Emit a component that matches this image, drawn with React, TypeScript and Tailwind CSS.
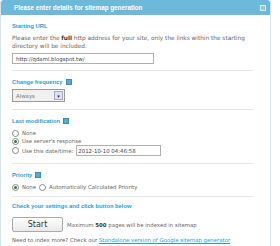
import React from "react";

const Help = () => (
  <span className="inline-block w-[6px] h-[6px] bg-[#5aa9d0] border border-[#3d8cb5] ml-[3px] align-middle" />
);

const Radio = ({ checked }: { checked?: boolean }) => (
  <span className="inline-flex items-center justify-center w-[7px] h-[7px] rounded-full border border-[#8a8a8a] bg-white mr-[3px]">
    {checked && <span className="w-[3px] h-[3px] rounded-full bg-[#2f7a3a]" />}
  </span>
);

const Sep = () => <div className="h-px bg-[#e6e6e6] mr-[17px]" />;

const Title = ({ children }: { children: React.ReactNode }) => (
  <div
    className="text-[#2a9ed6] font-bold text-[5.8px] leading-[8px] flex items-center"
    style={{ fontFamily: '"Liberation Sans", Arial, sans-serif' }}
  >
    {children}
  </div>
);

export default function App() {
  return (
    <div className="w-[280px] h-[246px] bg-white overflow-hidden" style={{ fontFamily: '"DejaVu Sans", Verdana, sans-serif' }}>
      <div className="w-[271px] border-r border-l border-[#d4e3ec] rounded-t-[3px]">
        <div className="h-[15px] bg-[#6cb9da] rounded-t-[3px] flex items-center justify-between pl-[13px] pr-[4px]">
          <span className="text-white font-bold text-[6.3px]" style={{ fontFamily: '"Liberation Sans", Arial, sans-serif' }}>
            Please enter details for sitemap generation
          </span>
          <span className="w-[6px] h-[6px] border border-[#d8eef8] bg-[#8fcbe6]" />
        </div>
        <div className="pl-[11px] pt-[7px] text-[#666] text-[5.4px] leading-[8px]">
          <Title>Starting URL</Title>
          <div className="mt-[4px] w-[234px] text-[5.8px] leading-[8px]">
            Please enter the <b className="text-[#333] leading-[8px]">full</b> http address for your site, only the links within the starting directory will be included.
          </div>
          <div className="mt-[3px] w-[142px] h-[11px] border border-[#b0b0b0] flex items-center px-[3px] text-[#444]">
            http://qdaml.blogspot.tw/
          </div>
          <div className="mt-[6px]"><Sep /></div>
          <div className="mt-[7px]"><Title>Change frequency<Help /></Title></div>
          <div className="mt-[3px] w-[53px] h-[13px] border border-[#9a9a9a] bg-[#f0f0f0] flex items-center justify-between pl-[3px] pr-[1px]">
            <span className="text-[#777]">Always</span>
            <span className="w-[9px] h-[9px] bg-[#d8e4f3] border border-[#aab] flex items-center justify-center text-[#335] text-[5px]">▾</span>
          </div>
          <div className="mt-[7px]"><Sep /></div>
          <div className="mt-[7px]"><Title>Last modification<Help /></Title></div>
          <div className="mt-[4px] flex flex-col">
            <div className="flex items-center h-[8px]"><Radio />None</div>
            <div className="flex items-center h-[8px]"><Radio checked />Use server's response</div>
            <div className="flex items-center h-[11px]"><Radio />Use this date/time:
              <span className="ml-[3px] w-[85px] h-[11px] border border-[#b0b0b0] flex items-center px-[1px] text-[#444]">2012-10-10 04:46:58</span>
            </div>
          </div>
          <div className="mt-[7px]"><Sep /></div>
          <div className="mt-[7px]"><Title>Priority<Help /></Title></div>
          <div className="mt-[4px] flex items-center h-[8px]"><Radio checked />None<span className="ml-[3px]" /><Radio />Automatically Calculated Priority</div>
          <div className="mt-[5px]"><Sep /></div>
          <div className="mt-[5px]"><Title>Check your settings and click button below</Title></div>
          <div className="mt-[7px] flex items-center">
            <span className="w-[51px] h-[15px] border border-[#aaa] rounded-[2px] bg-gradient-to-b from-white to-[#e8e8e8] flex items-center justify-center text-[#333] text-[8px]">Start</span>
            <span className="ml-[4px]">Maximum <b className="text-[#333]">500</b> pages will be indexed in sitemap</span>
          </div>
          <div className="mt-[4px]">
            Need to index more? Check our <span className="text-[#2a9ed6] underline">Standalone version of Google sitemap generator</span>
          </div>
          <div>and also find out about our other sitemap tools</div>
        </div>
      </div>
    </div>
  );
}
